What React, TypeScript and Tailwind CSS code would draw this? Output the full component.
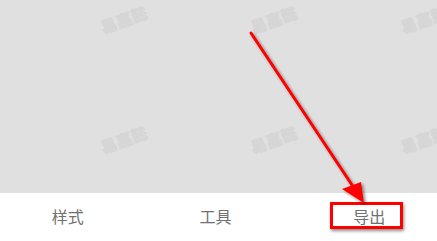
import React from 'react'

const WATERMARKS = [
  { x: 99, y: 11 },
  { x: 249, y: 11 },
  { x: 399, y: 11 },
  { x: 99, y: 131 },
  { x: 249, y: 131 },
  { x: 399, y: 131 },
]

function Watermark({ x, y }: { x: number; y: number }) {
  return (
    <div
      className="absolute -rotate-[20deg] font-['Noto_Sans_CJK_SC',sans-serif] font-bold text-[16px] leading-none text-[#d6d6d6] [text-shadow:1px_1px_1px_rgba(0,0,0,0.05)] whitespace-nowrap select-none"
      style={{ left: x, top: y }}
    >
      易嘉懿
    </div>
  )
}

export default function App() {
  return (
    <div className="relative w-[437px] h-[241px] overflow-hidden bg-white font-['Noto_Sans_CJK_SC',sans-serif]">
      {/* 预览区 */}
      <div className="relative h-[193px] bg-[#e0e0e0]">
        {WATERMARKS.map((w, i) => (
          <Watermark key={i} x={w.x} y={w.y} />
        ))}
      </div>

      {/* 底部 tab */}
      <div className="flex h-[48px] items-center pb-[2px] text-[16px] text-[#707070]">
        <div className="flex-1 text-center pr-[4px]">样式</div>
        <div className="flex-1 text-center pl-[8px]">工具</div>
        <div className="flex-1 text-center pl-[18px]">导出</div>
      </div>

      {/* 标注框 */}
      <div className="absolute left-[330px] top-[202px] w-[73px] h-[27px] border-[3px] border-[#ff0000] shadow-[1px_2px_3px_rgba(0,0,0,0.45)]" />

      {/* 标注箭头 */}
      <svg className="absolute inset-0 pointer-events-none" width="437" height="241" viewBox="0 0 437 241">
        <defs>
          <filter id="sh" x="-20%" y="-20%" width="140%" height="140%">
            <feDropShadow dx="2" dy="2" stdDeviation="1.5" floodColor="#000" floodOpacity="0.45" />
          </filter>
        </defs>
        <g filter="url(#sh)">
          <line x1="251" y1="33" x2="356" y2="191" stroke="#ff0000" strokeWidth="3" strokeLinecap="round" />
          <polygon points="364,203 342,189 361,182" fill="#ff0000" />
        </g>
      </svg>
    </div>
  )
}
